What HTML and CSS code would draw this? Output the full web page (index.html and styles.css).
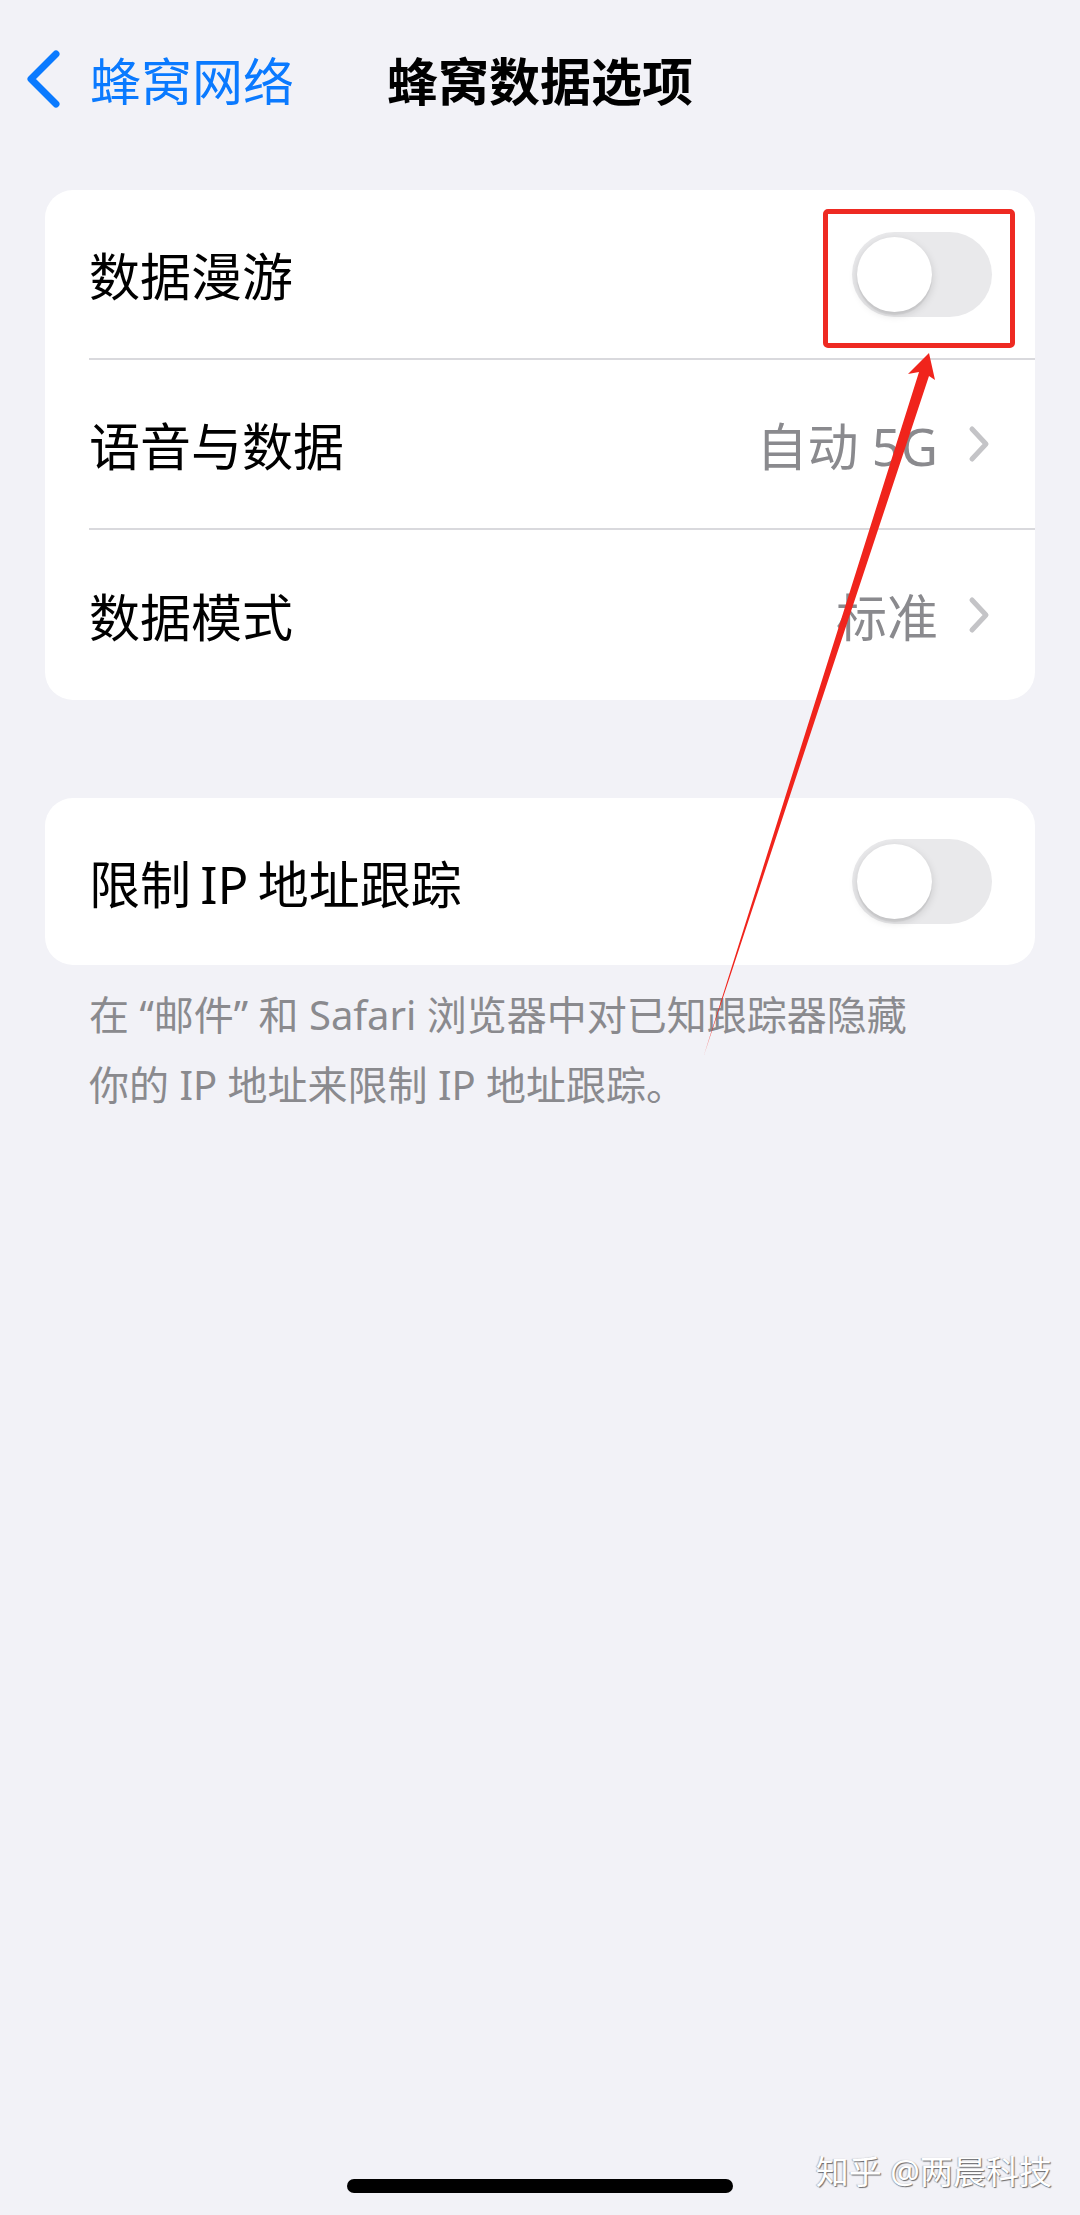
FILE: index.html
```html
<!DOCTYPE html>
<html lang="zh-CN">
<head>
    <meta charset="UTF-8">
    <meta name="viewport" content="width=device-width, initial-scale=1.0">
    <title>蜂窝数据选项</title>
    <link rel="stylesheet" href="styles.css">
</head>
<body>
    <div class="page">
        <header class="navbar">
            <a class="back" href="#cellular">
                <svg class="back-icon" width="40" height="62" viewBox="0 0 40 62">
                    <polyline points="34,6 9,31 34,56" fill="none" stroke="#0a7aff" stroke-width="7" stroke-linecap="round" stroke-linejoin="round"/>
                </svg>
                <span>蜂窝网络</span>
            </a>
            <h1 class="title">蜂窝数据选项</h1>
            <div></div>
        </header>

        <section class="group first">
            <div class="row">
                <span class="label">数据漫游</span>
                <span class="switch"><span class="knob"></span></span>
            </div>
            <div class="row">
                <span class="label">语音与数据</span>
                <span class="value">自动 5G</span>
                <svg class="chevron" width="22" height="38" viewBox="0 0 22 38">
                    <polyline points="4,4 18,19 4,34" fill="none" stroke="#c4c4c7" stroke-width="5" stroke-linecap="round" stroke-linejoin="round"/>
                </svg>
            </div>
            <div class="row">
                <span class="label">数据模式</span>
                <span class="value">标准</span>
                <svg class="chevron" width="22" height="38" viewBox="0 0 22 38">
                    <polyline points="4,4 18,19 4,34" fill="none" stroke="#c4c4c7" stroke-width="5" stroke-linecap="round" stroke-linejoin="round"/>
                </svg>
            </div>
        </section>

        <section class="group second">
            <div class="row">
                <span class="label">限制 IP 地址跟踪</span>
                <span class="switch"><span class="knob"></span></span>
            </div>
        </section>
        <p class="footnote">在 “邮件” 和 Safari 浏览器中对已知跟踪器隐藏<br>你的 IP 地址来限制 IP 地址跟踪。</p>

        <div class="spacer"></div>
        <div class="home-bar"><span class="home-indicator"></span></div>

        <!-- annotation on top of the screenshot -->
        <div class="mark-box"></div>
        <svg class="mark-arrow" width="1080" height="2215" viewBox="0 0 1080 2215">
            <polygon points="704,1055 919,372 908,374 929,353 935,380 929,376" fill="#f0241c"/>
        </svg>
        <div class="watermark">知乎 @两晨科技</div>
    </div>
</body>
</html>
```

FILE: styles.css
```css
body {
    margin: 0;
    padding: 0;
    background-color: #f2f2f7;
    font-family: "Noto Sans", "Noto Sans CJK SC", sans-serif;
    color: #000;
}
.page {
    position: relative;
    width: 1080px;
    min-height: 2215px;
    display: flex;
    flex-direction: column;
}
.navbar {
    height: 158px;
    display: grid;
    grid-template-columns: 1fr auto 1fr;
    align-items: center;
}
.back {
    display: flex;
    align-items: center;
    padding-left: 22px;
    color: #0a7aff;
    text-decoration: none;
    font-size: 51px;
}
.back-icon {
    margin-right: 28px;
}
.title {
    margin: 0;
    font-size: 51px;
    font-weight: 700;
}
.group {
    margin: 0 45px;
    background: #ffffff;
    border-radius: 28px;
    overflow: hidden;
}
.group.first {
    margin-top: 32px;
}
.group.second {
    margin-top: 98px;
}
.row {
    height: 170px;
    display: flex;
    align-items: center;
    margin-left: 44px;
    padding-right: 43px;
    border-bottom: 2px solid #d9d9dd;
    box-sizing: border-box;
}
.row:last-child {
    border-bottom: none;
}
.group.second .row {
    height: 167px;
}
.label {
    flex: 1;
    font-size: 51px;
    white-space: nowrap;
    word-spacing: -4px;
}
.value {
    font-size: 51px;
    color: #8a8a8e;
}
.chevron {
    margin-left: 30px;
    margin-right: 2px;
}
.switch {
    position: relative;
    width: 140px;
    height: 85px;
    border-radius: 43px;
    background: #e9e9eb;
}
.knob {
    position: absolute;
    left: 5px;
    top: 5px;
    width: 75px;
    height: 75px;
    border-radius: 50%;
    background: #ffffff;
    box-shadow: 0 3px 8px rgba(0, 0, 0, 0.15), 0 3px 1px rgba(0, 0, 0, 0.06);
}
.footnote {
    margin: 15px 0 0 89px;
    font-size: 40px;
    line-height: 70px;
    color: #8a8a8e;
}
.spacer {
    flex: 1;
}
.home-bar {
    display: flex;
    justify-content: center;
    padding-bottom: 22px;
}
.home-indicator {
    width: 386px;
    height: 14px;
    border-radius: 7px;
    background: #000;
}
.mark-box {
    position: absolute;
    left: 823px;
    top: 209px;
    width: 192px;
    height: 139px;
    box-sizing: border-box;
    border: 5px solid #ee2a22;
    border-radius: 5px;
}
.mark-arrow {
    position: absolute;
    left: 0;
    top: 0;
    pointer-events: none;
}
.watermark {
    position: absolute;
    right: 28px;
    top: 2146px;
    font-size: 33px;
    color: #ffffff;
    text-shadow: 1px 1px 1px rgba(0, 0, 0, 0.55), -1px 0 1px rgba(0, 0, 0, 0.25);
}
```
